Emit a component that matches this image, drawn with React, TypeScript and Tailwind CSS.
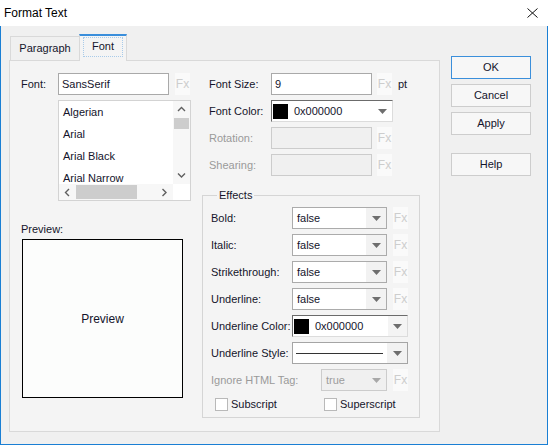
// Format Text dialog, Font tab.

const TEXT = "text-[#14142b]";

function Fx({ className = "" }: { className?: string }) {
  return (
    <div
      className={`flex h-[22px] w-[15px] shrink-0 items-center justify-center bg-[#fafafa] text-[12px] text-[#cdcdcd] ${className}`}
    >
      Fx
    </div>
  );
}

function Arrow({ color = "#6e6e6e" }: { color?: string }) {
  return (
    <svg width="9" height="5" viewBox="0 0 9 5">
      <path d="M0 0h9L4.5 5z" fill={color} />
    </svg>
  );
}

function Chevron({ dir }: { dir: "up" | "down" | "left" | "right" }) {
  const d = {
    up: "M1 5L4.5 1.5L8 5",
    down: "M1 1.5L4.5 5L8 1.5",
    left: "M5 1L1.5 4.5L5 8",
    right: "M1.5 1L5 4.5L1.5 8",
  }[dir];
  const vert = dir === "up" || dir === "down";
  return (
    <svg width={vert ? 9 : 7} height={vert ? 7 : 9} viewBox={vert ? "0 0 9 7" : "0 0 7 9"}>
      <path d={d} fill="none" stroke="#606060" strokeWidth="1.4" />
    </svg>
  );
}

function Combo({
  value,
  width,
  disabled = false,
}: {
  value: string;
  width: string;
  disabled?: boolean;
}) {
  return (
    <div
      className={`flex h-[22px] shrink-0 border ${width} ${
        disabled ? "border-[#cccccc] bg-[#f0f0f0] text-[#9d9d9d]" : "border-[#ababab] bg-white"
      }`}
    >
      <div className="flex flex-1 items-center pl-[4px]">{value}</div>
      <div className={`flex w-[20px] items-center justify-center ${disabled ? "" : "bg-[#f2f2f2]"}`}>
        <Arrow color={disabled ? "#a8a8a8" : "#6e6e6e"} />
      </div>
    </div>
  );
}

function ColorCombo({ width, arrowBg }: { width: string; arrowBg: string }) {
  return (
    <div
      className={`flex h-[22px] shrink-0 border border-t-[#6b6b6b] border-l-[#6b6b6b] border-r-[#dcdcdc] border-b-[#dcdcdc] bg-white ${width}`}
    >
      <div className="flex flex-1 items-center pl-[1px]">
        <div className="h-[15px] w-[15px] bg-black" />
        <span className="ml-[6px]">0x000000</span>
      </div>
      <div className={`flex w-[19px] items-center justify-center ${arrowBg}`}>
        <Arrow />
      </div>
    </div>
  );
}

function TextBox({ value = "", width, disabled = false }: { value?: string; width: string; disabled?: boolean }) {
  return (
    <div
      className={`flex h-[22px] shrink-0 items-center border pl-[3px] ${width} ${
        disabled ? "border-[#cccccc] bg-[#f0f0f0]" : "border-[#a9a9a9] bg-white"
      }`}
    >
      {value}
    </div>
  );
}

function Button({ children, primary = false, className = "" }: { children: string; primary?: boolean; className?: string }) {
  return (
    <div
      className={`flex h-[23px] items-center justify-center border bg-[#f7f7f7] ${
        primary ? "border-[#3b8fdb]" : "border-[#cdcdcd]"
      } ${className}`}
    >
      {children}
    </div>
  );
}

const FONTS = ["Algerian", "Arial", "Arial Black", "Arial Narrow"];

function FontList() {
  return (
    <div className="ml-[37px] mt-[5px] flex h-[101px] w-[133px] flex-col border border-[#d3d3d3] bg-white">
      <div className="flex h-[83px]">
        <div className="flex-1 overflow-hidden">
          {FONTS.map((f) => (
            <div key={f} className="flex h-[22px] items-center whitespace-nowrap pl-[4px]">
              {f}
            </div>
          ))}
        </div>
        <div className="flex w-[17px] flex-col items-center bg-[#f7f7f7]">
          <div className="flex h-[17px] items-center">
            <Chevron dir="up" />
          </div>
          <div className="h-[11px] w-[15px] bg-[#cdcdcd]" />
          <div className="flex-1" />
          <div className="flex h-[17px] items-center">
            <Chevron dir="down" />
          </div>
        </div>
      </div>
      <div className="flex h-[16px]">
        <div className="flex flex-1 items-center bg-[#f7f7f7]">
          <div className="flex w-[17px] justify-center">
            <Chevron dir="left" />
          </div>
          <div className="h-[14px] w-[61px] bg-[#cdcdcd]" />
          <div className="flex-1" />
          <div className="flex w-[17px] justify-center">
            <Chevron dir="right" />
          </div>
        </div>
        <div className="w-[17px] bg-white" />
      </div>
    </div>
  );
}

function Row({ label, labelW, children, disabled = false }: { label: string; labelW: string; children: React.ReactNode; disabled?: boolean }) {
  return (
    <div className="flex h-[22px] items-center">
      <div className={`shrink-0 ${labelW} ${disabled ? "text-[#9a9a9a]" : ""}`}>{label}</div>
      {children}
    </div>
  );
}

function Check({ label }: { label: string }) {
  return (
    <div className="flex items-center">
      <div className="h-[13px] w-[13px] border border-[#b9b9b9] bg-white" />
      <span className="ml-[3px]">{label}</span>
    </div>
  );
}

export default function App() {
  return (
    <div className={`flex h-[445px] w-[548px] flex-col overflow-hidden font-['Liberation_Sans',Arial,sans-serif] text-[11px] ${TEXT}`}>
      {/* title bar */}
      <div className="flex h-[26px] shrink-0 items-center justify-between bg-white pl-[4px] pr-[10px] text-[12px] text-black">
        <span>Format Text</span>
        <svg width="11" height="10" viewBox="0 0 11 10">
          <path d="M0.5 0.5L10.5 9.5M10.5 0.5L0.5 9.5" stroke="#111" strokeWidth="1" />
        </svg>
      </div>

      <div className="flex flex-1 border-x border-b border-[#1a7fd4] bg-[#f0f0f0] pl-[8px] pt-[8px]">
        {/* tabs + panel */}
        <div className="flex w-[431px] flex-col">
          <div className="flex h-[26px] items-end pl-[1px]">
            <div className="flex h-[24px] w-[69px] items-center justify-center border-l border-t border-[#d9d9d9] bg-[#f0f0f0]">
              Paragraph
            </div>
            <div className="relative z-10 -mb-px flex h-[27px] w-[48px] flex-col border-x border-t-2 border-x-[#d9d9d9] border-t-[#3a8edb] bg-[#f4f4f4] px-[3px] pt-[1px]">
              <div className="flex h-[20px] items-center justify-center border border-dotted border-[#a9cbe9] pb-[1px]">
                Font
              </div>
            </div>
          </div>

          <div className="flex h-[372px] border border-[#d9d9d9] bg-[#f4f4f4] pl-[11px] pt-[12px]">
            {/* left column */}
            <div className="flex w-[181px] flex-col">
              <div className="flex h-[22px] items-center">
                <div className="w-[37px]">Font:</div>
                <TextBox value="SansSerif" width="w-[111px]" />
                <Fx className="ml-[6px]" />
              </div>
              <FontList />
              <div className="mt-[21px] h-[14px] leading-[14px]">Preview:</div>
              <div className="ml-[1px] mt-[3px] flex h-[159px] w-[161px] items-center justify-center border border-black bg-[#fcfdfc] text-[12px]">
                Preview
              </div>
            </div>

            {/* right column */}
            <div className="flex w-[218px] flex-col">
              <div className="flex flex-col gap-[5px] pl-[7px]">
                <Row label="Font Size:" labelW="w-[62px]">
                  <TextBox value="9" width="w-[101px]" />
                  <Fx className="ml-[5px]" />
                  <span className="ml-[6px]">pt</span>
                </Row>
                <Row label="Font Color:" labelW="w-[62px]">
                  <ColorCombo width="w-[122px]" arrowBg="bg-white" />
                </Row>
                <Row label="Rotation:" labelW="w-[62px]" disabled>
                  <TextBox width="w-[101px]" disabled />
                  <Fx className="ml-[5px]" />
                </Row>
                <Row label="Shearing:" labelW="w-[62px]" disabled>
                  <TextBox width="w-[101px]" disabled />
                  <Fx className="ml-[5px]" />
                </Row>
              </div>

              <fieldset className="mt-[12px] border border-[#d5d5d5] pb-[6px] pl-[8px] pt-[5px]">
                <legend className="ml-[6px] h-[14px] px-[2px] leading-[14px]">Effects</legend>
                <div className="flex flex-col gap-[5px]">
                  {["Bold:", "Italic:", "Strikethrough:", "Underline:"].map((l) => (
                    <Row key={l} label={l} labelW="w-[81px]">
                      <Combo value="false" width="w-[95px]" />
                      <Fx className="ml-[6px]" />
                    </Row>
                  ))}
                  <Row label="Underline Color:" labelW="w-[81px]">
                    <ColorCombo width="w-[116px]" arrowBg="bg-[#f4f4f4]" />
                  </Row>
                  <Row label="Underline Style:" labelW="w-[81px]">
                    <div className="flex h-[22px] w-[116px] border border-[#a5a5a5] bg-white">
                      <div className="flex flex-1 items-center pl-[3px] pr-[4px]">
                        <div className="h-px w-full bg-[#333]" />
                      </div>
                      <div className="flex w-[20px] items-center justify-center bg-[#f2f2f2]">
                        <Arrow />
                      </div>
                    </div>
                  </Row>
                  <Row label="Ignore HTML Tag:" labelW="w-[110px]" disabled>
                    <Combo value="true" width="w-[66px]" disabled />
                    <Fx className="ml-[6px]" />
                  </Row>
                </div>
                <div className="ml-[4px] mt-[7px] flex h-[13px] items-center">
                  <div className="w-[109px]">
                    <Check label="Subscript" />
                  </div>
                  <Check label="Superscript" />
                </div>
              </fieldset>
            </div>
          </div>
        </div>

        {/* buttons */}
        <div className="ml-[11px] flex w-[80px] flex-col gap-[5px] pt-[22px]">
          <Button primary>OK</Button>
          <Button>Cancel</Button>
          <Button>Apply</Button>
          <Button className="mt-[13px]">Help</Button>
        </div>
      </div>
    </div>
  );
}
